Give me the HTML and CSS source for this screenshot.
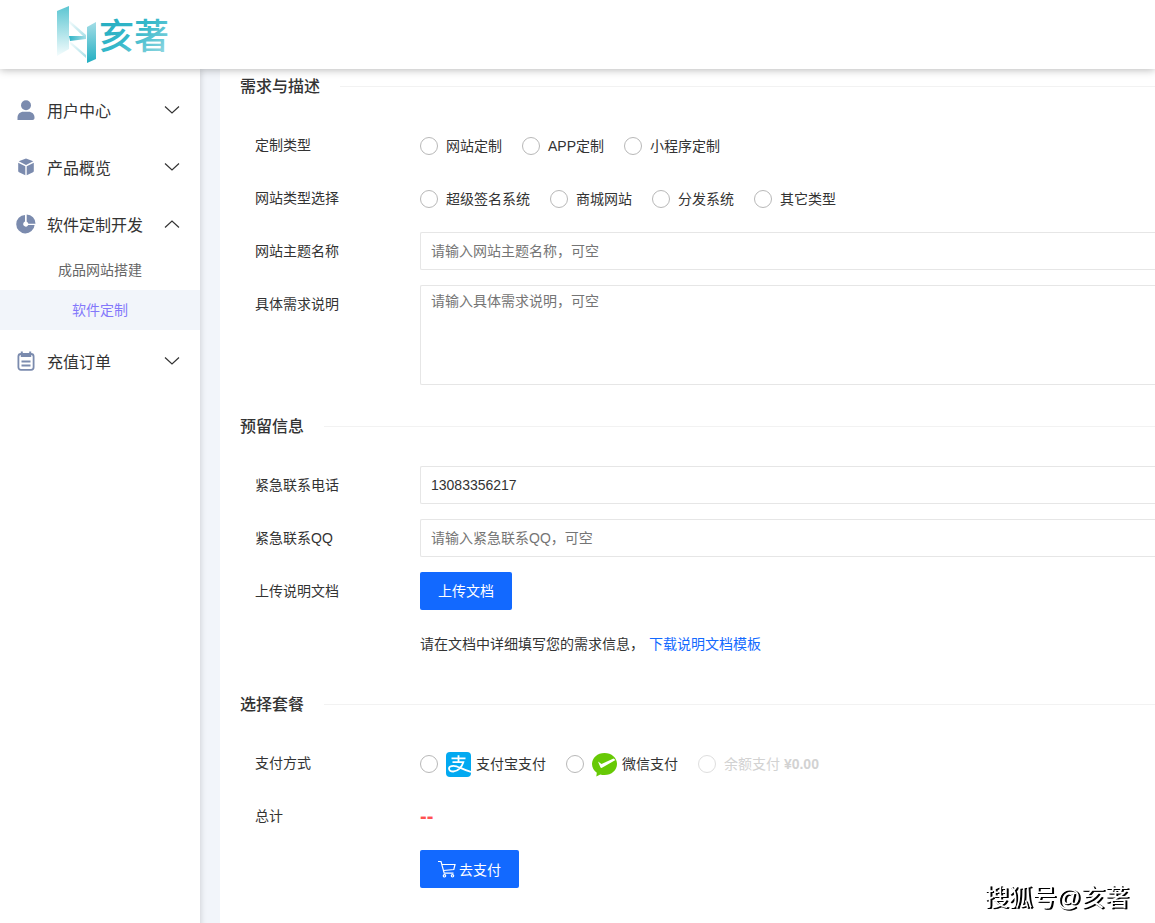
FILE: index.html
```html
<!DOCTYPE html>
<html lang="zh-CN">
<head>
<meta charset="utf-8">
<meta name="viewport" content="width=device-width, initial-scale=1">
<title>软件定制</title>
<link rel="stylesheet" href="styles.css">
</head>
<body>
<header class="header">
  <svg class="logo" width="120" height="60" viewBox="0 0 120 60" role="img" aria-label="亥著">
    <defs>
      <linearGradient id="barLeft" x1="0" y1="0" x2="0" y2="1">
        <stop offset="0" stop-color="#5cc6d2"/><stop offset="1" stop-color="#f4fcfd"/>
      </linearGradient>
      <linearGradient id="barRight" x1="0" y1="0" x2="0" y2="1">
        <stop offset="0" stop-color="#a4dde6"/><stop offset="1" stop-color="#22afc2"/>
      </linearGradient>
      <linearGradient id="wedge" x1="0" y1="0" x2="1" y2="0">
        <stop offset="0" stop-color="#2fb3c6"/><stop offset="1" stop-color="#a8dfe7"/>
      </linearGradient>
      <linearGradient id="fadeIn" x1="0" y1="0" x2="1" y2="1">
        <stop offset="0" stop-color="#f6fcfd"/><stop offset="1" stop-color="#a8dfe7"/>
      </linearGradient>
      <linearGradient id="nameFill" x1="0" y1="0" x2="1" y2="1">
        <stop offset="0" stop-color="#1fa9bd"/><stop offset="0.5" stop-color="#35b8ca"/><stop offset="1" stop-color="#a5dde5"/>
      </linearGradient>
    </defs>
    <path d="M2 6 14 1V44L2 51Z" fill="url(#barLeft)"/>
    <path d="M14 15 31 30V32L28 31 14 18Z" fill="url(#fadeIn)"/>
    <path d="M14 31H31V34L15 36Z" fill="url(#wedge)"/>
    <path d="M15 36 31 50V53L15 39Z" fill="url(#fadeIn)"/>
    <path d="M32 22 41 17V54L32 58Z" fill="url(#barRight)"/>
    <text class="logo-name" x="44" y="44" fill="url(#nameFill)">亥著</text>
  </svg>
</header>
<div class="layout">
  <nav class="sidebar">
    <ul class="menu">
      <li class="menu-item">
        <button class="menu-head" type="button" aria-expanded="false">
          <svg class="menu-icon" viewBox="0 0 20 20"><circle cx="10" cy="5.200" r="5"/><path d="M1.500 20v-2.500C1.500 14 4 11.700 7.500 11.700h5c3.500 0 6 2.300 6 5.800V18c0 1-.8 2-2 2Z"/></svg>
          <span>用户中心</span>
          <svg class="arrow" viewBox="0 0 14 8"><path d="M0 .5 7 7l7-6.500"/></svg>
        </button>
      </li>
      <li class="menu-item">
        <button class="menu-head" type="button" aria-expanded="false">
          <svg class="menu-icon" viewBox="0 0 20 20"><path d="M10 1.500 17.300 4.300 10 8 2.700 4.300ZM2.200 5.700 9.300 9.200V18.300L3 15.300Q2.200 15 2.200 14ZM17.800 5.700 10.700 9.200V18.300L17 15.300Q17.800 15 17.800 14Z"/></svg>
          <span>产品概览</span>
          <svg class="arrow" viewBox="0 0 14 8"><path d="M0 .5 7 7l7-6.500"/></svg>
        </button>
      </li>
      <li class="menu-item">
        <button class="menu-head" type="button" aria-expanded="true">
          <svg class="menu-icon" viewBox="0 0 20 20"><path d="M9 1v6.600a2.600 2.600 0 1 0 3.200 3.400H18.600A9.200 9.200 0 1 1 9 1Z"/><path d="M10.700.5A9 9 0 0 1 19.500 9.700H12.400A3 3 0 0 0 10.700 7.800Z"/></svg>
          <span>软件定制开发</span>
          <svg class="arrow" viewBox="0 0 14 8"><path d="M0 7.500 7 1l7 6.500"/></svg>
        </button>
        <ul class="submenu">
          <li><a class="sub-link" href="#site">成品网站搭建</a></li>
          <li><a class="sub-link active" href="#custom" aria-current="page">软件定制</a></li>
        </ul>
      </li>
      <li class="menu-item">
        <button class="menu-head" type="button" aria-expanded="false">
          <svg class="menu-icon" viewBox="0 0 20 20"><rect class="line" x="2.400" y="3" width="15.200" height="15.800" rx="2.500"/><path d="M4.800.5h2V2h6.400V.5h2V6H4.800Z"/><path class="line" d="M5.500 10.500h9M5.500 14.500h9"/></svg>
          <span>充值订单</span>
          <svg class="arrow" viewBox="0 0 14 8"><path d="M0 .5 7 7l7-6.500"/></svg>
        </button>
      </li>
    </ul>
  </nav>
  <main class="main">
    <form class="form">
      <section class="section">
        <h2 class="title"><span>需求与描述</span></h2>
        <div class="row">
          <span class="label" id="l-kind">定制类型</span>
          <div class="field options" role="radiogroup" aria-labelledby="l-kind">
            <label class="option"><input class="radio" type="radio" name="kind">网站定制</label>
            <label class="option"><input class="radio" type="radio" name="kind">APP定制</label>
            <label class="option"><input class="radio" type="radio" name="kind">小程序定制</label>
          </div>
        </div>
        <div class="row">
          <span class="label" id="l-site">网站类型选择</span>
          <div class="field options" role="radiogroup" aria-labelledby="l-site">
            <label class="option"><input class="radio" type="radio" name="site">超级签名系统</label>
            <label class="option"><input class="radio" type="radio" name="site">商城网站</label>
            <label class="option"><input class="radio" type="radio" name="site">分发系统</label>
            <label class="option"><input class="radio" type="radio" name="site">其它类型</label>
          </div>
        </div>
        <div class="row">
          <label class="label" for="topic">网站主题名称</label>
          <input class="field input" id="topic" type="text" placeholder="请输入网站主题名称，可空">
        </div>
        <div class="row">
          <label class="label" for="detail">具体需求说明</label>
          <textarea class="field input area" id="detail" placeholder="请输入具体需求说明，可空"></textarea>
        </div>
      </section>
      <section class="section">
        <h2 class="title"><span>预留信息</span></h2>
        <div class="row">
          <label class="label" for="phone">紧急联系电话</label>
          <input class="field input" id="phone" type="text" value="13083356217">
        </div>
        <div class="row">
          <label class="label" for="qq">紧急联系QQ</label>
          <input class="field input" id="qq" type="text" placeholder="请输入紧急联系QQ，可空">
        </div>
        <div class="row">
          <span class="label">上传说明文档</span>
          <div class="field"><button class="btn" type="button">上传文档</button></div>
        </div>
        <div class="row">
          <span class="label"></span>
          <p class="field hint">请在文档中详细填写您的需求信息，<a class="link" href="#template">下载说明文档模板</a></p>
        </div>
      </section>
      <section class="section">
        <h2 class="title"><span>选择套餐</span></h2>
        <div class="row">
          <span class="label" id="l-pay">支付方式</span>
          <div class="field options" role="radiogroup" aria-labelledby="l-pay">
            <label class="option"><input class="radio" type="radio" name="pay">
              <svg class="pay-icon" viewBox="0 0 25 25"><rect width="25" height="25" rx="4" fill="#02a9f1"/><path d="M5.500 6.300h14M12.500 3.300v7M6.500 10.200h10.800C16 14.500 12.500 19.500 7.300 19.500 4.500 19.500 3 18.300 3 16.600S4.800 13.800 7.500 13.800C12 13.800 16 17.500 25 20" fill="none" stroke="#fff" stroke-width="1.800"/></svg>支付宝支付</label>
            <label class="option"><input class="radio" type="radio" name="pay">
              <svg class="pay-icon" viewBox="0 0 25 25"><path d="M12.500 1C19.500 1 25 5.800 25 12s-5.500 11-12.500 11c-1.500 0-2.900-.2-4.200-.6L4.300 24.500 4.800 20.800C1.900 18.800 0 15.600 0 12 0 5.800 5.500 1 12.500 1Z" fill="#67c905"/><path d="M6 9.500 9.500 12 21.500 6.500 23.500 8 10 15.800Q8.800 16.200 8.300 15Z" fill="#fff"/></svg>微信支付</label>
            <label class="option disabled"><input class="radio" type="radio" name="pay" disabled>余额支付&nbsp;<b>¥0.00</b></label>
          </div>
        </div>
        <div class="row">
          <span class="label">总计</span>
          <div class="field total">--</div>
        </div>
        <div class="row">
          <span class="label"></span>
          <div class="field"><button class="btn btn-pay" type="submit"><svg class="cart" viewBox="0 0 18 18"><path d="M0 1.500h3L6.200 13.200H15.500M4 4.500H17L15.800 9.500 5.500 10.500"/><circle cx="6.500" cy="15.800" r="1.200"/><circle cx="14.500" cy="15.800" r="1.200"/></svg><span>去支付</span></button></div>
        </div>
      </section>
    </form>
  </main>
</div>
<div class="watermark">搜狐号@亥著</div>
</body>
</html>
```

FILE: styles.css
```css
* { box-sizing: border-box; }

body {
  margin: 0;
  min-height: 100vh;
  display: flex;
  flex-direction: column;
  overflow-x: hidden;
  background: #f2f5fa;
  color: #333;
  font: 14px/20px "Liberation Sans", "Noto Sans CJK SC", sans-serif;
}

button, input, textarea { font: inherit; color: inherit; }
ul { list-style: none; margin: 0; padding: 0; }
a { text-decoration: none; }

.header {
  position: relative;
  z-index: 2;
  height: 69px;
  padding: 5px 55px;
  background: #fff;
  box-shadow: 0 1px 8px rgba(0, 0, 0, .28);
}
.logo { display: block; }
.logo-name { font: 500 35px "Noto Sans CJK SC", sans-serif; }

.layout { flex: 1; display: flex; }

.sidebar {
  flex: none;
  width: 200px;
  padding-top: 15px;
  background: #fff;
  box-shadow: 1px 0 6px rgba(0, 0, 0, .14);
}
.menu-item { margin-bottom: 5px; }
.menu-head {
  display: flex;
  align-items: center;
  width: 100%;
  height: 52px;
  padding: 0 21px 0 16px;
  border: 0;
  background: none;
  font-size: 16px;
  text-align: left;
}
.menu-head span { flex: 1; margin-left: 11px; padding-top: 3px; }
.menu-icon { width: 20px; height: 20px; fill: #7b8bae; }
.menu-icon .line { fill: none; stroke: #7b8bae; stroke-width: 1.8; }
.arrow { width: 14px; height: 8px; fill: none; stroke: #333; stroke-width: 1.2; overflow: visible; }
.sub-link {
  display: block;
  line-height: 40px;
  text-align: center;
  color: #666;
}
.sub-link.active { background: #f2f5fa; color: #8378fa; }

.main { flex: 1; min-width: 0; margin-left: 20px; padding: 6px 0 20px 20px; background: #fff; }
.section { margin-bottom: 30px; }
.title {
  display: flex;
  align-items: center;
  gap: 20px;
  margin: 0 0 29px;
  font-size: 16px;
  line-height: 20px;
  font-weight: 500;
}
.title span { padding-top: 2px; }
.title::after { content: ""; flex: 1; height: 1px; background: #f2f2f2; }

.row { display: flex; align-items: flex-start; }
.row + .row { margin-top: 15px; }
.label { flex: none; width: 180px; padding: 9px 15px; }
.field { flex: 1; min-width: 0; margin: 0; }

.options { display: flex; flex-wrap: wrap; gap: 0 20px; }
.option { display: flex; align-items: center; height: 40px; margin-bottom: -2px; white-space: nowrap; }
.radio {
  appearance: none;
  width: 18px;
  height: 18px;
  margin: 0 8px 0 0;
  border: 1px solid #b8b8b8;
  border-radius: 50%;
}
.radio:checked { border: 5px solid #1269ff; }
.disabled { color: #d2d2d2; }
.disabled .radio { border-color: #dedede; }
.pay-icon { width: 25px; height: 25px; margin-right: 5px; }

.input {
  height: 38px;
  padding: 0 10px;
  border: 1px solid #e6e6e6;
  border-right: 0;
  border-radius: 2px 0 0 2px;
  background: #fff;
  outline: 0;
}
.input::placeholder { color: #757575; opacity: 1; }
.area { height: 100px; padding: 5px 10px; resize: none; }

.btn {
  display: flex;
  align-items: center;
  gap: 3px;
  height: 38px;
  padding: 0 18px;
  border: 0;
  border-radius: 2px;
  background: #1269ff;
  color: #fff;
}
.btn-pay span { padding-top: 2px; }
.cart { width: 18px; height: 18px; fill: none; stroke: #fff; stroke-width: 1.2; }
.hint { padding: 9px 0; }
.link { color: #1269ff; margin-left: 5px; }
.total { color: #ff5151; font-size: 20px; font-weight: bold; line-height: 38px; }

.watermark {
  position: fixed;
  right: 26px;
  bottom: 10px;
  color: #fff;
  font-size: 24px;
  line-height: 30px;
  text-shadow: 1px 1px 0 #000, 2px 1px 0 #000;
}
```
